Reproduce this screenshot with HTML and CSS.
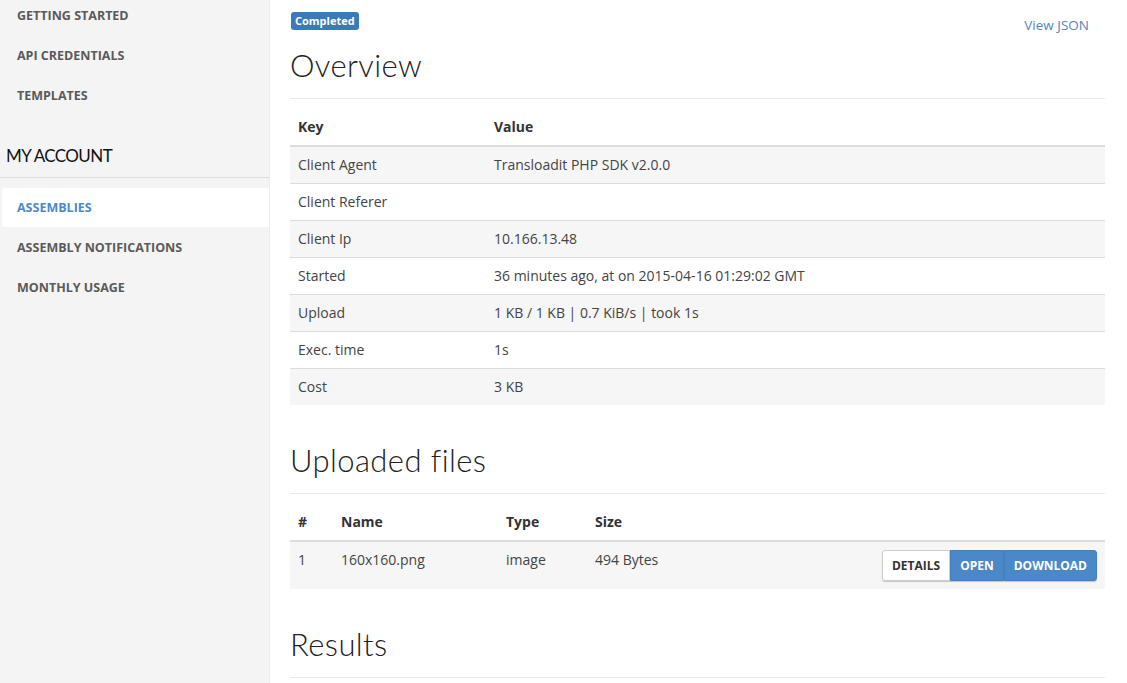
FILE: index.html
```html
<!DOCTYPE html>
<html>
<head>
<meta charset="utf-8">
<link rel="stylesheet" href="styles.css">
</head>
<body>
<div class="page">
  <aside class="sidebar">
    <ul class="nav nav-top">
      <li class="nav-item">Getting Started</li>
      <li class="nav-item">API Credentials</li>
      <li class="nav-item">Templates</li>
    </ul>
    <div class="nav-heading">My Account</div>
    <ul class="nav">
      <li class="nav-item active">Assemblies</li>
      <li class="nav-item">Assembly Notifications</li>
      <li class="nav-item">Monthly Usage</li>
    </ul>
  </aside>
  <main class="main">
    <div class="topbar">
      <span class="badge">Completed</span>
      <a class="json-link">View JSON</a>
    </div>
    <h1 class="section-title first">Overview</h1>
    <table class="table overview">
      <thead>
        <tr><th class="col-key">Key</th><th>Value</th></tr>
      </thead>
      <tbody>
        <tr><td>Client Agent</td><td>Transloadit PHP SDK v2.0.0</td></tr>
        <tr><td>Client Referer</td><td></td></tr>
        <tr><td>Client Ip</td><td>10.166.13.48</td></tr>
        <tr><td>Started</td><td>36 minutes ago, at on 2015-04-16 01:29:02 GMT</td></tr>
        <tr><td>Upload</td><td>1 KB / 1 KB | 0.7 KiB/s | took 1s</td></tr>
        <tr><td>Exec. time</td><td>1s</td></tr>
        <tr><td>Cost</td><td>3 KB</td></tr>
      </tbody>
    </table>
    <h2 class="section-title">Uploaded files</h2>
    <table class="table files">
      <thead>
        <tr><th class="col-num">#</th><th class="col-name">Name</th><th class="col-type">Type</th><th class="col-size">Size</th><th></th></tr>
      </thead>
      <tbody>
        <tr>
          <td>1</td><td>160x160.png</td><td>image</td><td>494 Bytes</td>
          <td class="actions">
            <div class="btn-group">
              <span class="btn btn-default">Details</span><span class="btn btn-primary">Open</span><span class="btn btn-primary">Download</span>
            </div>
          </td>
        </tr>
      </tbody>
    </table>
    <h2 class="section-title">Results</h2>
  </main>
</div>
</body>
</html>
```
FILE: styles.css
```css
html, body {
  margin: 0;
  padding: 0;
  height: 100%;
  overflow: hidden;
}
body {
  font-family: "Open Sans", "Liberation Sans", sans-serif;
  font-size: 14px;
  color: #444;
  background: #fff;
}
.page {
  display: flex;
  height: 683px;
}
.sidebar {
  width: 269px;
  flex: none;
  background: #f4f4f4;
  border-right: 1px solid #ececec;
}
.nav {
  list-style: none;
  margin: 0;
  padding: 0;
}
.nav-top {
  margin-top: -4px;
}
.nav-item {
  height: 40px;
  line-height: 40px;
  padding-left: 17px;
  font-size: 12.5px;
  font-weight: 700;
  text-transform: uppercase;
  color: #5a5a5a;
}
.nav-item.active {
  background: #fff;
  color: #4a8ac8;
  margin: 10px 0 0 2px;
  padding-left: 15px;
  height: 39px;
  line-height: 39px;
  border-radius: 3px 0 0 3px;
}
.nav-item.active + .nav-item {
  margin-top: 1px;
}
.nav-heading {
  margin-top: 30px;
  padding: 0 0 11px 6px;
  height: 20px;
  line-height: 20px;
  font-family: "Lato", sans-serif;
  font-size: 17px;
  letter-spacing: -0.6px;
  font-weight: 400;
  text-transform: uppercase;
  color: #111;
  border-bottom: 1px solid #dedede;
}
.main {
  flex: 1;
  padding: 0 22px 0 20px;
}
.topbar {
  display: flex;
  justify-content: space-between;
  align-items: flex-start;
  padding-top: 12px;
}
.badge {
  display: inline-block;
  background: #3b79b9;
  color: #fff;
  font-size: 11px;
  font-weight: 700;
  height: 18px;
  line-height: 18px;
  padding: 0 4px;
  margin-left: 1px;
  border-radius: 3px;
}
.json-link {
  color: #5a84b9;
  font-size: 13.5px;
  line-height: 20px;
  margin-top: 3px;
  margin-right: 16px;
}
.section-title {
  font-family: "Lato", sans-serif;
  font-weight: 300;
  font-size: 31px;
  letter-spacing: 0.4px;
  line-height: 40px;
  color: #222;
  margin: 35px 0 0;
  padding-bottom: 13px;
  border-bottom: 1px solid #e8e8e8;
}
.section-title.first {
  margin-top: 10px;
}
.table {
  width: 100%;
  border-collapse: collapse;
  table-layout: fixed;
  margin-top: 10px;
}
.table th {
  text-align: left;
  font-weight: 700;
  color: #333;
  padding: 8px;
  line-height: 20px;
  border-bottom: 2px solid #ddd;
}
.table td {
  padding: 8px;
  line-height: 20px;
  border-top: 1px solid #ddd;
  vertical-align: top;
}
.table tbody tr:nth-child(odd) {
  background: #f6f6f6;
}
.overview .col-key {
  width: 180px;
}
.files .col-num { width: 27px; }
.files .col-name { width: 149px; }
.files .col-type { width: 73px; }
.files .col-size { width: 120px; }
.actions {
  text-align: right;
}
.btn-group {
  display: inline-flex;
  border-radius: 3px;
  box-shadow: 0 1px 1px rgba(0,0,0,0.2);
}
.btn {
  display: inline-block;
  font-size: 12px;
  font-weight: 700;
  text-transform: uppercase;
  height: 29px;
  line-height: 29px;
  border: 1px solid transparent;
}
.btn-default {
  background: #fff;
  color: #333;
  border-color: #ccc;
  padding: 0 9px;
  border-radius: 3px 0 0 3px;
}
.btn-primary {
  background: #4a88c7;
  color: #fff;
  border-color: #4580bd;
  padding: 0 9px;
}
.btn-primary:last-child {
  border-radius: 0 3px 3px 0;
}
```
